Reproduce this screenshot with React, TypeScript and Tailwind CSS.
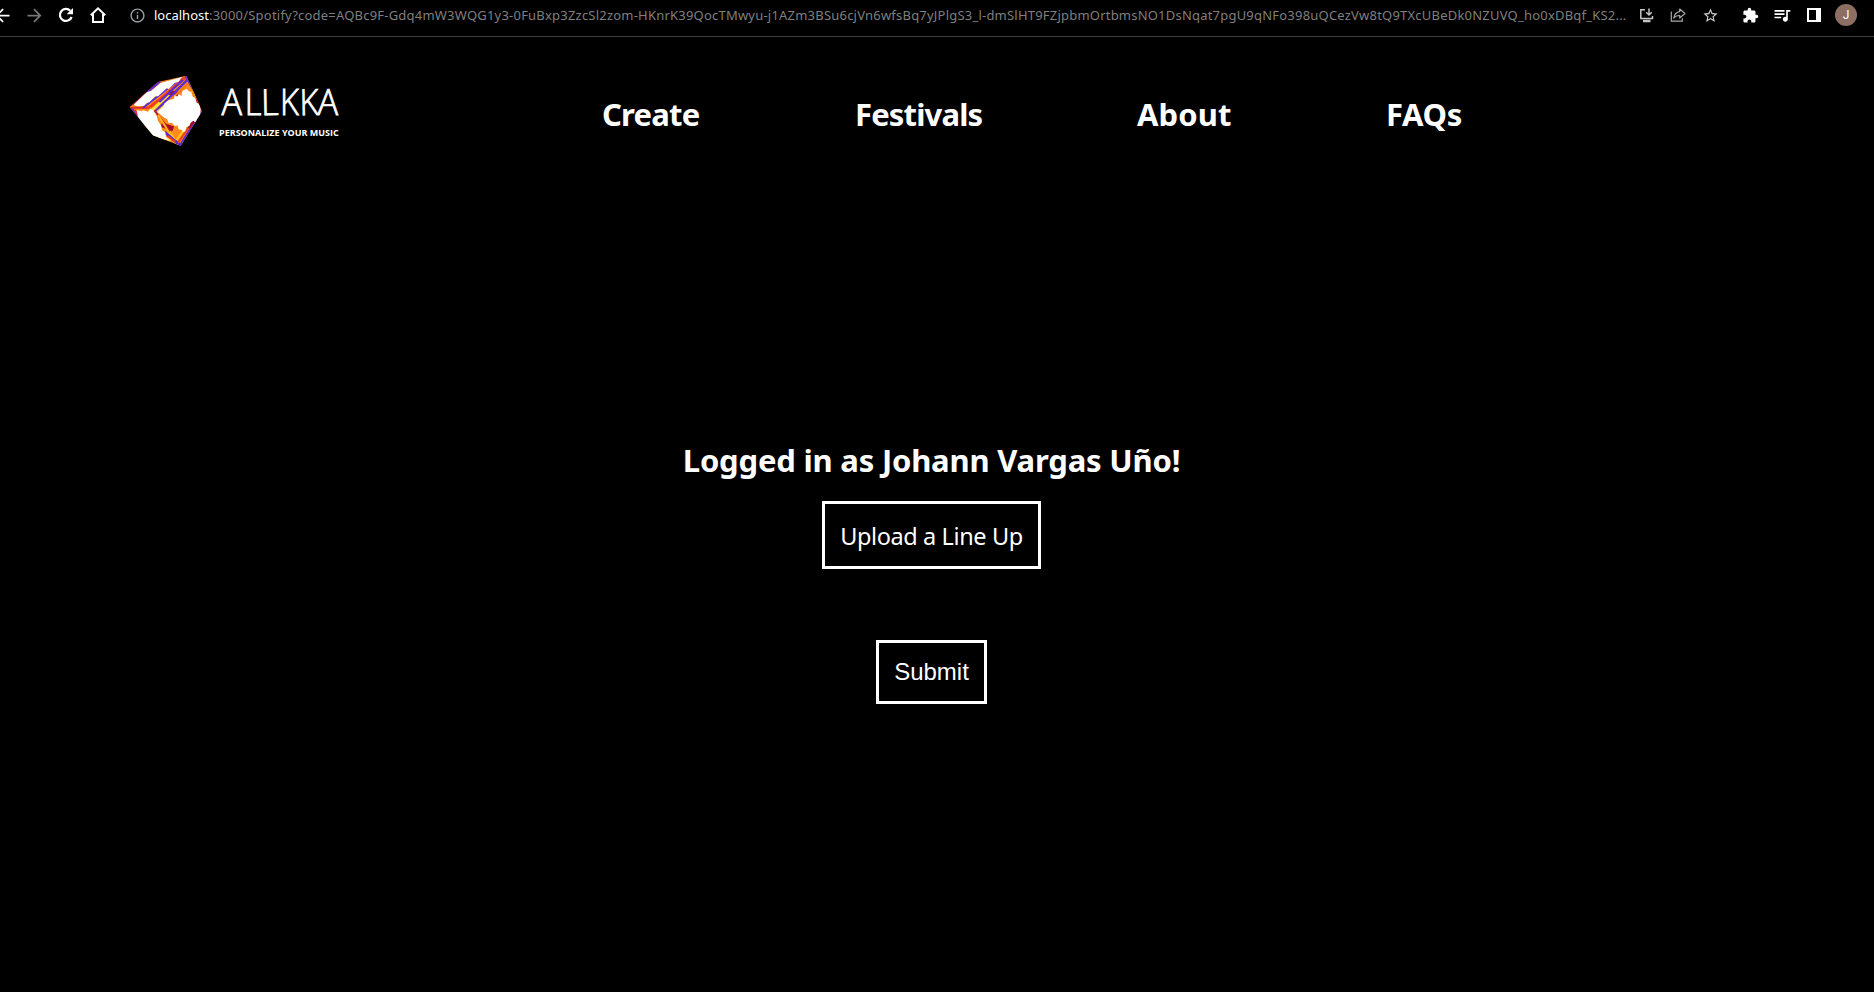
import type { ReactNode } from "react";
import { MdArrowBack, MdArrowForward, MdExtension, MdInfoOutline, MdQueueMusic, MdStarBorder } from "react-icons/md";

const QUERY =
  ":3000/Spotify?code=AQBc9F-Gdq4mW3WQG1y3-0FuBxp3ZzcSl2zom-HKnrK39QocTMwyu-j1AZm3BSu6cjVn6wfsBq7yJPlgS3_l-dmSlHT9FZjpbmOrtbmsNO1DsNqat7pgU9qNFo398uQCezVw8tQ9TXcUBeDk0NZUVQ_ho0xDBqf_KS2...";

function Slot({ children }: { children: ReactNode }) {
  return <div className="flex w-8 shrink-0 items-center justify-center">{children}</div>;
}

function ReloadIcon() {
  return (
    <svg width="16" height="16" viewBox="0 0 16 16" fill="none">
      <path d="M13.600 10A6 6 0 1 1 12.300 3.800" stroke="#fff" strokeWidth="2.200" />
      <path d="M15 1v6.300H8.700z" fill="#fff" />
    </svg>
  );
}

function HomeIcon() {
  return (
    <svg width="16" height="16" viewBox="0 0 16 16" fill="none" stroke="#fff" strokeWidth="2">
      <path d="M.8 8.3 8 1.4l7.200 6.900M3 7v8h10V7" />
    </svg>
  );
}

function InstallIcon() {
  return (
    <svg width="15" height="15" viewBox="0 0 15 15" fill="none" stroke="#c4c4c4" strokeWidth="1.500">
      <path d="M6 1.800H1.800v8.700h11.700V8" />
      <path d="M10 .5v6M7.200 4.200 10 7l2.800-2.800" />
      <path d="M4 13h7.500" strokeWidth="2.500" />
    </svg>
  );
}

function ShareIcon() {
  return (
    <svg width="16" height="16" viewBox="0 0 16 16" fill="none" stroke="#a8a8a8" strokeWidth="1.200">
      <path d="M1.300 4.500v9.700h11v-3" />
      <path d="M9.700 2 15 6.500 9.700 11V8.500C7 8.500 5.200 9.200 3.800 11 4.400 7.500 6.500 5 9.700 4.600z" strokeLinejoin="round" />
    </svg>
  );
}

function PanelIcon() {
  return (
    <svg width="14" height="14" viewBox="0 0 14 14">
      <path fill="#fff" fillRule="evenodd" d="M0 0h14v14H0zM2 2v10h7V2z" />
    </svg>
  );
}

function BrowserBar() {
  return (
    <header className="flex h-[37px] items-center overflow-hidden border-b border-[#3c3c3c] pb-[6px] pr-3 text-white">
      <div className="-ml-[14px] flex shrink-0 items-center">
        <Slot><MdArrowBack size={21} /></Slot>
        <Slot><MdArrowForward size={21} color="#767676" /></Slot>
        <Slot><ReloadIcon /></Slot>
        <Slot><HomeIcon /></Slot>
      </div>
      <MdInfoOutline size={17} color="#9aa0a6" className="ml-[15px] shrink-0" />
      <p className="ml-2 min-w-0 flex-1 whitespace-nowrap font-['Noto_Sans',sans-serif] text-[13px] leading-[18px] text-[#7f7f7f]">
        <span className="text-white">localhost</span>
        <span className="tracking-[0.212px]">{QUERY}</span>
      </p>
      <div className="mr-2 flex shrink-0 items-center">
        <Slot><InstallIcon /></Slot>
        <Slot><ShareIcon /></Slot>
        <Slot><MdStarBorder size={17} color="#d0d0d0" /></Slot>
      </div>
      <div className="flex shrink-0 items-center">
        <Slot><MdExtension size={17} /></Slot>
        <Slot><MdQueueMusic size={20} /></Slot>
        <Slot><PanelIcon /></Slot>
        <Slot>
          <span className="flex size-[22px] items-center justify-center rounded-full bg-[#8d6e63] font-[Roboto,sans-serif] text-[12px]">J</span>
        </Slot>
      </div>
    </header>
  );
}

function CubeMark() {
  return (
    <svg className="shrink-0" width="74" height="72" viewBox="43 31 222 216">
      <clipPath id="cube">
        <path d="M45 127 130 52l85-19 47 107-64 103-83-31z" />
      </clipPath>
      <g clipPath="url(#cube)" fill="none" strokeWidth="6">
        <path fill="#ff8a1c" d="M40 30h230v220H40z" />
        <path stroke="#b01030" d="M45 123 130 48M52 120l80-66" />
        <path stroke="#5b2bd6" strokeWidth="8" d="M95 84l42-36M50 130l34 46" />
        <path stroke="#fbe234" strokeWidth="9" d="M84 176l34 36 50 14M112 136l60-54" />
        <path stroke="#e3312a" d="M48 129h56M60 136l30 40" />
        <path stroke="#5b2bd6" d="M84 130 200 40" />
        <path stroke="#f3401c" d="M108 128 218 30M100 130 214 40" />
        <path stroke="#a00828" strokeWidth="14" d="M162 84l30 4M140 180l36 12" />
        <path stroke="#5b2bd6" strokeWidth="7" d="M122 140 222 42M134 112l70-66" />
        <path stroke="#ffd52a" strokeWidth="8" d="M118 152l38-34M236 76l22 46" />
        <path stroke="#f47a10" d="M150 120 226 52M228 56l16 42" />
        <path stroke="#5b2bd6" strokeWidth="8" d="M214 34l20 36M180 226l24 22" />
        <path stroke="#c0183a" d="M120 138l50 66M242 100l20 44" />
        <path stroke="#ffb416" d="M130 150l56 90M166 200l26 46" />
        <path stroke="#5b2bd6" strokeWidth="8" d="M150 202l50 44M198 240l62-98" />
        <path stroke="#f3401c" d="M190 234l56-78M158 214l24 18" />
        <path stroke="#a00828" strokeWidth="8" d="M222 190l18-26" />
        <path stroke="#ffc61f" d="M186 226l28-40M204 240l50-74" />
        <path fill="#fff" d="m58 122 2-5 36-34 14-5 28-23 64-18-10 14-12 4-18 18-6-2-26 24h-8l-18 18-8 2-8 8-18 2z" />
        <path fill="#fff" d="m128 142 18-16 4-10 12-10 16-4 2-10 8 4 4-8 8 6 4-16 12-6 6 8 8 2 4 14 8 4 4 14 8 4 4 14-2 26-12 16-8-6-8 6-4 10-10 4-2 12-8 2-2-6-10-2-4-12-8 2-8-10-10 2-4-12-8-4z" />
        <path fill="#fff" d="m66 136 14 4 6-3 14 4 6-8 8 2 12 18 4 16 10 14 2 14 10 6 2 14 10 10-38-6-14-10-14-12-12-14-8-16-8-12z" />
      </g>
    </svg>
  );
}

function Logo() {
  return (
    <div className="flex items-start pl-[129px]">
      <CubeMark />
      <div className="ml-4 mt-2 text-white">
        <div className="flex h-[38px] pl-[2px] pt-px font-['Open_Sans',sans-serif] text-[36px] font-light leading-[36px] [-webkit-text-stroke:0.8px_white]">
          <span className="mr-[2px] w-[21px] origin-bottom scale-x-95">A</span>
          <span className="w-[17px] origin-bottom scale-x-90">L</span>
          <span className="w-[18px] origin-bottom -rotate-1 scale-x-95">L</span>
          <span className="w-[20px] origin-bottom scale-x-90">K</span>
          <span className="w-[18px] origin-bottom -rotate-1 scale-x-90">K</span>
          <span className="w-[20px] origin-bottom rotate-1 scale-x-95">A</span>
        </div>
        <p className="mt-[6px] whitespace-nowrap font-['Open_Sans',sans-serif] text-[9px] font-bold leading-3">PERSONALIZE YOUR MUSIC</p>
      </div>
    </div>
  );
}

function NavBar() {
  return (
    <div className="flex h-[128px] items-start pt-[38px]">
      <div className="w-[602px] shrink-0"><Logo /></div>
      <nav className="flex pt-[17px] font-['Noto_Sans',sans-serif] text-[31px] font-bold leading-[44px] text-white">
        <a className="w-[253px] tracking-[-0.8px]">Create</a>
        <a className="w-[282px] tracking-[-0.85px]">Festivals</a>
        <a className="w-[249px] tracking-[0.1px]">About</a>
        <a className="tracking-[-0.35px]">FAQs</a>
      </nav>
    </div>
  );
}

export default function App() {
  return (
    <div className="h-[992px] w-full overflow-hidden bg-black">
      <BrowserBar />
      <NavBar />
      <main className="flex flex-col items-center pr-[11px] pt-[273px] text-white">
        <h1 className="font-['Noto_Sans',sans-serif] text-[31px] font-bold leading-[44px] tracking-[-0.2px]">
          Logged in as Johann Vargas Uño!
        </h1>
        <button className="mt-[19px] flex h-[68px] w-[219px] items-center justify-center whitespace-nowrap border-[3px] border-white pt-[3px] font-['Noto_Sans',sans-serif] text-[23.5px] tracking-[-0.4px]">
          Upload a Line Up
        </button>
        <button className="mt-[71px] flex h-16 w-[111px] items-center justify-center border-[3px] border-white font-['Liberation_Sans',sans-serif] text-2xl">
          Submit
        </button>
      </main>
    </div>
  );
}
